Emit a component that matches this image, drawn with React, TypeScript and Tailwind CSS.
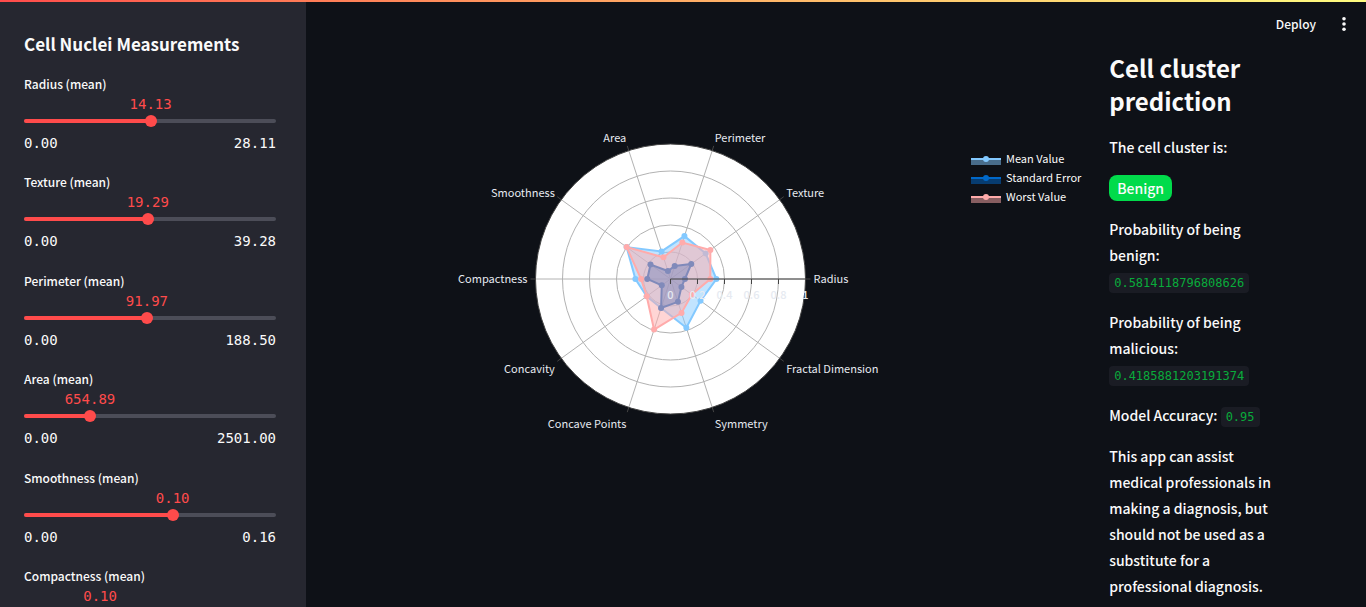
type Measurement = {
  label: string;
  value: number;
  max: number;
};

const measurements: Measurement[] = [
  { label: "Radius (mean)", value: 14.1273, max: 28.11 },
  { label: "Texture (mean)", value: 19.2896, max: 39.28 },
  { label: "Perimeter (mean)", value: 91.969, max: 188.5 },
  { label: "Area (mean)", value: 654.8891, max: 2501 },
  { label: "Smoothness (mean)", value: 0.0964, max: 0.1634 },
  { label: "Compactness (mean)", value: 0.1043, max: 0.3454 },
];

function MeasurementSlider({ label, value, max }: Measurement) {
  const id = label.toLowerCase().replace(/[^a-z]+/g, "-");
  const percent = `${(value / max) * 100}%`;
  return (
    <div>
      <label htmlFor={id} className="block text-[12px] font-medium leading-5">
        {label}
      </label>
      <div className="relative h-[21px]">
        <output
          htmlFor={id}
          className="absolute top-0 -translate-x-1/2 font-['DejaVu_Sans_Mono',monospace] text-[14px] leading-5 text-[#ff4b4b]"
          style={{ left: percent }}
        >
          {value.toFixed(2)}
        </output>
      </div>
      <div className="relative flex h-3 items-center">
        <div className="h-1 w-full overflow-hidden rounded-full bg-[#4c4d58]">
          <div className="h-full bg-[#ff4b4b]" style={{ width: percent }} />
        </div>
        <input
          id={id}
          type="range"
          min={0}
          max={max}
          step="any"
          defaultValue={value}
          className="absolute inset-y-0 -left-1.5 w-[calc(100%+12px)] cursor-pointer appearance-none bg-transparent [&::-webkit-slider-thumb]:size-3 [&::-webkit-slider-thumb]:appearance-none [&::-webkit-slider-thumb]:rounded-full [&::-webkit-slider-thumb]:bg-[#ff4b4b]"
        />
      </div>
      <div className="mt-1.5 flex justify-between font-['DejaVu_Sans_Mono',monospace] text-[14px] leading-5">
        <span>0.00</span>
        <span>{max.toFixed(2)}</span>
      </div>
    </div>
  );
}

const categories = [
  "Radius",
  "Texture",
  "Perimeter",
  "Area",
  "Smoothness",
  "Compactness",
  "Concavity",
  "Concave Points",
  "Symmetry",
  "Fractal Dimension",
];

const series = [
  {
    name: "Mean Value",
    color: "#83c9ff",
    values: [0.34, 0.322, 0.334, 0.215, 0.402, 0.26, 0.218, 0.226, 0.38, 0.275],
  },
  {
    name: "Standard Error",
    color: "#0068c9",
    values: [0.107, 0.19, 0.101, 0.062, 0.183, 0.172, 0.08, 0.226, 0.178, 0.1],
  },
  {
    name: "Worst Value",
    color: "#ffabab",
    values: [0.295, 0.365, 0.284, 0.169, 0.402, 0.218, 0.218, 0.394, 0.264, 0.195],
  },
];

const CX = 284.5;
const CY = 225;
const R = 135;

function polar(index: number, radius: number): [number, number] {
  const angle = (index / categories.length) * Math.PI * 2;
  return [CX + Math.cos(angle) * radius, CY - Math.sin(angle) * radius];
}

function labelShift(index: number): number {
  if (index % 5 === 0) return 4;
  return 6 - 7 * Math.sin((index / categories.length) * Math.PI * 2);
}

function RadarChart() {
  return (
    <svg
      viewBox="0 0 707 450"
      preserveAspectRatio="xMinYMin meet"
      className="h-[450px] w-full overflow-visible"
      role="img"
      aria-label="Cell nuclei radar chart"
    >
      <circle cx={CX} cy={CY} r={R} fill="#fff" />
      {[0.2, 0.4, 0.6, 0.8].map((r) => (
        <circle key={r} cx={CX} cy={CY} r={r * R} fill="none" stroke="#b2b2b2" />
      ))}
      {categories.map((name, i) => {
        const [x, y] = polar(i, R);
        const [tx, ty] = polar(i, R + 5);
        return (
          <g key={name}>
            <line x1={CX} y1={CY} x2={x} y2={y} stroke="#b2b2b2" />
            <line x1={x} y1={y} x2={tx} y2={ty} stroke="#444" />
          </g>
        );
      })}
      <circle cx={CX} cy={CY} r={R} fill="none" stroke="#444" />

      {series.map((s) => {
        const points = s.values.map((v, i) => polar(i, v * R));
        return (
          <g key={s.name}>
            <polygon
              points={points.map((p) => p.join(",")).join(" ")}
              fill={s.color}
              fillOpacity={0.5}
              stroke={s.color}
              strokeWidth={2}
            />
            {points.map(([x, y], i) => (
              <circle key={i} cx={x} cy={y} r={3} fill={s.color} />
            ))}
          </g>
        );
      })}

      <line x1={CX} y1={CY} x2={CX + R} y2={CY} stroke="#444" />
      {[0, 0.2, 0.4, 0.6, 0.8, 1].map((r) => (
        <g key={r}>
          <line x1={CX + r * R} y1={CY} x2={CX + r * R} y2={CY + 5} stroke="#444" />
          <text
            x={CX + r * R}
            y={CY + 20}
            textAnchor="middle"
            className="fill-[#e6eaf1] text-[11px] font-medium"
          >
            {r}
          </text>
        </g>
      ))}

      {categories.map((name, i) => {
        const [x, y] = polar(i, R + 8);
        return (
          <text
            key={name}
            x={x}
            y={y + labelShift(i)}
            textAnchor={x > CX ? "start" : "end"}
            className="fill-[#e6eaf1] text-[11px]"
          >
            {name}
          </text>
        );
      })}

      {series.map((s, i) => {
        const y = 105 + i * 19;
        return (
          <g key={s.name}>
            <rect x={585} y={y} width={30} height={6} fill={s.color} fillOpacity={0.5} />
            <line x1={585} y1={y} x2={615} y2={y} stroke={s.color} strokeWidth={2} />
            <circle cx={600} cy={y} r={3} fill={s.color} />
            <text x={620} y={y + 4} className="fill-[#fafafa] text-[11px]">
              {s.name}
            </text>
          </g>
        );
      })}
    </svg>
  );
}

function Code({ children }: { children: string }) {
  return (
    <code className="rounded bg-[#1a1c24] px-[5px] py-[3px] font-['DejaVu_Sans_Mono',monospace] text-[12px] leading-4 text-[#09ab3b]">
      {children}
    </code>
  );
}

export default function App() {
  return (
    <div className="flex h-screen flex-col overflow-hidden bg-[#0e1117] font-['Noto_Sans_CJK_SC',sans-serif] text-[#fafafa]">
      <div className="h-0.5 shrink-0 bg-linear-to-r from-[#ff4b4b] to-[#fffd80]" />
      <div className="flex min-h-0 flex-1">
        <aside className="w-[306px] shrink-0 overflow-y-auto bg-[#262730] pt-7 pr-[30px] pl-6 [scrollbar-width:none]">
          <h2 className="mb-4 text-[17px] font-bold leading-7">Cell Nuclei Measurements</h2>
          <form className="flex h-[571px] flex-col justify-between">
            {measurements.map((m) => (
              <MeasurementSlider key={m.label} {...m} />
            ))}
          </form>
        </aside>
        <div className="flex min-w-0 flex-1 flex-col overflow-hidden">
          <header className="flex h-11 shrink-0 items-center justify-end gap-[18px] pr-3">
            <button type="button" className="text-[12px] font-medium leading-5">
              Deploy
            </button>
            <button type="button" aria-label="Main menu" className="flex size-5 items-center justify-center">
              <svg viewBox="0 0 20 20" className="size-5 fill-[#fafafa]">
                <circle cx="10" cy="4.7" r="1.8" />
                <circle cx="10" cy="10" r="1.8" />
                <circle cx="10" cy="15.3" r="1.8" />
              </svg>
            </button>
          </header>
          <main className="grid grid-cols-[4fr_1fr] gap-4 px-20">
            <section className="min-w-0 pt-2">
              <RadarChart />
            </section>
            <section className="flex min-w-0 flex-col gap-[15px] pt-[5px] text-[14px] font-medium leading-[26px]">
              <h1 className="mb-0.5 text-[24px] font-bold leading-[33px]">Cell cluster prediction</h1>
              <p>The cell cluster is:</p>
              <p>
                <span className="inline-block rounded-lg bg-[#01db4b] px-2">Benign</span>
              </p>
              <p>
                Probability of being benign: <Code>0.5814118796808626</Code>
              </p>
              <p>
                Probability of being malicious: <Code>0.4185881203191374</Code>
              </p>
              <p>
                Model Accuracy: <Code>0.95</Code>
              </p>
              <p>
                This app can assist medical professionals in making a diagnosis, but should not be used as a
                substitute for a professional diagnosis.
              </p>
            </section>
          </main>
        </div>
      </div>
    </div>
  );
}
